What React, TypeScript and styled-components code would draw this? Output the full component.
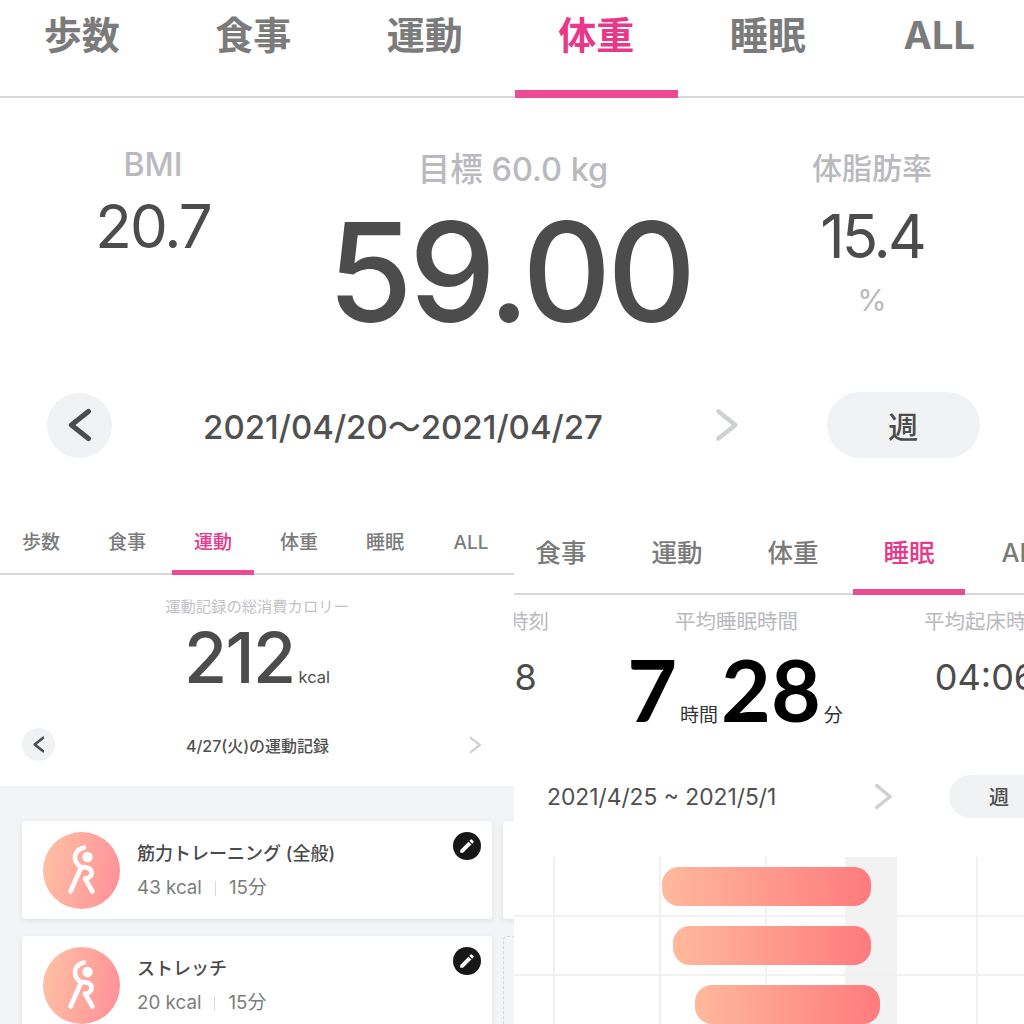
import React from "react"
import styled, { createGlobalStyle } from "styled-components"
import { MdEdit } from "react-icons/md"

const JP = `"Inter", "Noto Sans CJK JP", sans-serif`

const GlobalStyle = createGlobalStyle`
  html, body {
    margin: 0;
    background: #fff;
    overflow: hidden;
  }
  #root {
    width: 1024px;
    height: 1024px;
    overflow: hidden;
    font-family: ${JP};
  }
`

const ChevronSvg = styled.svg`
  flex: none;
`

const Chevron = ({ dir, size, color, width }: { dir: "left" | "right"; size: number; color: string; width: number }) => (
  <ChevronSvg width={size * 0.7} height={size} viewBox="0 0 14 20" fill="none" stroke={color} strokeWidth={width} strokeLinecap="round" strokeLinejoin="round">
    <polyline points={dir === "left" ? "12,2 2,10 12,18" : "2,2 12,10 2,18"} />
  </ChevronSvg>
)

const StretchIcon = () => (
  <svg width="77" height="77" viewBox="0 0 77 77" fill="none" stroke="#fff" strokeWidth="4.6" strokeLinecap="round" strokeLinejoin="round">
    <circle cx="44.5" cy="25" r="5.2" fill="#fff" stroke="none" />
    <path d="M41 15.5C34 17 30 23 33 30C34 32 36 34 38 35" />
    <path d="M38 35.5L27.5 59.5" />
    <path d="M38 35.5C45 34 49.5 38 48.5 42C48 45 45 46.5 42 46.5L49.5 59.5" />
  </svg>
)

const TABS = ["歩数", "食事", "運動", "体重", "睡眠", "ALL"]

const TabBar = styled.div`
  flex: none;
  box-shadow: inset 0 -2px 0 #d8d8da;
  overflow: hidden;
`

const TabTrack = styled.div<{ $offset: number }>`
  display: flex;
  margin-left: ${p => p.$offset}px;
`

const Tab = styled.div<{ $width: number; $height: number; $size: number; $inset: number; $bar: number; $pad: number; $active?: boolean }>`
  flex: none;
  box-sizing: border-box;
  width: ${p => p.$width - p.$inset * 2}px;
  height: ${p => p.$height}px;
  margin: 0 ${p => p.$inset}px;
  display: flex;
  justify-content: center;
  white-space: nowrap;
  padding-top: ${p => p.$pad}px;
  font-size: ${p => p.$size}px;
  line-height: 1.2;
  font-weight: ${p => (p.$size > 30 ? 700 : 500)};
  color: ${p => (p.$active ? "#e8388a" : "#7b7b7b")};
  border-bottom: ${p => p.$bar}px solid ${p => (p.$active ? "#ee4a94" : "transparent")};
`

const Page = styled.main`
  width: 1024px;
  height: 1024px;
  display: flex;
  flex-direction: column;
  background: #fff;
`

const TopPanel = styled.section`
  height: 495px;
  flex: none;
`

const TopStats = styled.div`
  display: grid;
  grid-template-columns: 306px 414px 304px;
  height: 294px;
`

const StatColumn = styled.div<{ $top: number }>`
  padding-top: ${p => p.$top}px;
  display: flex;
  flex-direction: column;
  align-items: center;
  color: #4c4c4c;
`

const StatLabel = styled.div<{ $size: number }>`
  font-size: ${p => p.$size}px;
  line-height: 1.2;
  font-weight: 500;
  color: #b9b9be;
  white-space: nowrap;
`

const StatValue = styled.div<{ $size: number; $top: number; $spacing: number }>`
  font-size: ${p => p.$size}px;
  letter-spacing: ${p => p.$spacing}px;
  line-height: 1;
  margin-top: ${p => p.$top}px;
  white-space: nowrap;
`

const MainValue = styled.div`
  font-size: 138px;
  font-weight: 500;
  letter-spacing: -4px;
  line-height: 1;
  margin: 14px 6px 0 0;
  white-space: nowrap;
`

const StatUnit = styled.div`
  margin-top: 16px;
  font-size: 30px;
  line-height: 1.2;
  color: #b9b9be;
`

const DateRow = styled.div`
  display: flex;
  align-items: center;
  height: 66px;
  padding-left: 47px;
`

const RoundButton = styled.div<{ $size: number }>`
  flex: none;
  width: ${p => p.$size}px;
  height: ${p => p.$size}px;
  border-radius: 50%;
  background: #f1f2f4;
  display: flex;
  align-items: center;
  justify-content: center;
`

const DateText = styled.div<{ $width: number; $size: number; $weight: number; $after?: number }>`
  width: ${p => p.$width}px;
  margin-right: ${p => p.$after ?? 0}px;
  flex: none;
  text-align: center;
  font-size: ${p => p.$size}px;
  font-weight: ${p => p.$weight};
  color: #505050;
  white-space: nowrap;
`

const Pill = styled.div<{ $width: number; $height: number; $size: number; $left: number }>`
  flex: none;
  width: ${p => p.$width}px;
  height: ${p => p.$height}px;
  margin-left: ${p => p.$left}px;
  border-radius: ${p => p.$height / 2}px;
  background: #f1f2f4;
  display: flex;
  align-items: center;
  justify-content: center;
  font-size: ${p => p.$size}px;
  font-weight: 500;
  color: #4c4c4c;
`

const Bottom = styled.div`
  display: flex;
  flex: 1;
  min-height: 0;
`

const LeftPanel = styled.section`
  width: 514px;
  flex: none;
  overflow: hidden;
  display: flex;
  flex-direction: column;
`

const RightPanel = styled.section`
  width: 510px;
  flex: none;
  overflow: hidden;
`

const Total = styled.div`
  display: flex;
  flex-direction: column;
  align-items: center;
  height: 153px;
  padding-top: 23px;
  box-sizing: border-box;
`

const TotalLabel = styled.div`
  font-size: 15.3px;
  line-height: 18px;
  color: #c2c2c6;
`

const TotalValue = styled.div`
  display: flex;
  align-items: baseline;
  gap: 4px;
  margin-top: 6px;
  font-size: 70px;
  font-weight: 500;
  letter-spacing: -1.6px;
  line-height: 72px;
  color: #4c4c4c;
`

const TotalUnit = styled.span`
  font-size: 16.5px;
  font-weight: 400;
  letter-spacing: 0;
`

const RecordNav = styled.div`
  display: flex;
  align-items: center;
  height: 33px;
  padding-left: 22px;
`

const ListArea = styled.div`
  flex: 1;
  margin-top: 25px;
  background: #f3f4f6;
  padding: 35px 0 0 22px;
  display: grid;
  grid-template-columns: 470px 470px;
  grid-auto-rows: 98px;
  column-gap: 11px;
  row-gap: 17px;
  overflow: hidden;
`

const Card = styled.article`
  position: relative;
  display: flex;
  align-items: center;
  gap: 17px;
  padding-left: 21px;
  background: #fff;
  border-radius: 4px;
  box-shadow: 0 2px 6px rgba(0, 0, 0, 0.08);
`

const EmptyCard = styled.div`
  border: 1px dashed #d8d9dc;
  border-radius: 4px;
`

const Avatar = styled.div`
  width: 77px;
  height: 77px;
  flex: none;
  border-radius: 50%;
  background: linear-gradient(100deg, #ffc2a4, #ff8f98);
`

const CardCopy = styled.div`
  padding-top: 2px;
`

const CardTitle = styled.div`
  font-size: 18px;
  font-weight: 500;
  line-height: 24px;
  color: #4a4a4a;
`

const CardMeta = styled.div`
  display: flex;
  align-items: center;
  margin-top: 10px;
  font-size: 18.8px;
  line-height: 24px;
  color: #7d7d7d;
`

const MetaDivider = styled.span`
  width: 1px;
  height: 15px;
  margin: 0 13px;
  background: #d9d9d9;
`

const EditButton = styled.button`
  position: absolute;
  top: 11px;
  right: 11px;
  width: 28px;
  height: 28px;
  padding: 0;
  border: 0;
  border-radius: 50%;
  background: #171717;
  color: #fff;
  display: flex;
  align-items: center;
  justify-content: center;
`

const SleepStats = styled.div`
  display: grid;
  grid-template-columns: repeat(3, 249px);
  margin-left: -151px;
  height: 180px;
  padding-top: 13px;
  box-sizing: border-box;
`

const SleepLabel = styled.div`
  font-size: 20.5px;
  line-height: 28px;
  text-align: center;
  color: #b9b9be;
  white-space: nowrap;
`

const SleepSide = styled.div`
  margin-top: 19px;
  text-align: center;
  font-size: 36px;
  line-height: 44px;
  color: #4c4c4c;
  white-space: nowrap;
`

const SleepMain = styled.div`
  display: flex;
  align-items: baseline;
  justify-content: center;
  margin-top: 10px;
  font-family: "Lato", sans-serif;
  font-size: 86px;
  line-height: 86px;
  font-weight: 700;
  color: #000;
`

const SleepUnit = styled.span`
  font-family: ${JP};
  font-size: 19px;
  font-weight: 400;
  color: #333;
  margin: 0 3px;
`

const SleepNav = styled.div`
  display: flex;
  align-items: center;
  height: 43px;
  padding-left: 33px;
`

const Chart = styled.svg`
  display: block;
  margin-top: 39px;
`

const ChartBars = [
  { x: 148, y: 10, w: 209 },
  { x: 159, y: 69, w: 198 },
  { x: 181, y: 128, w: 185 },
]

const Records = [
  { title: "筋力トレーニング (全般)", kcal: "43 kcal" },
  { title: "ストレッチ", kcal: "20 kcal" },
]

export default function App() {
  return (
    <Page>
      <GlobalStyle />
      <TopPanel>
        <TabBar>
          <TabTrack $offset={-4}>
            {TABS.map(t => (
              <Tab key={t} $width={171.5} $height={98} $size={38} $pad={13} $inset={4} $bar={8} $active={t === "体重"}>{t}</Tab>
            ))}
          </TabTrack>
        </TabBar>
        <TopStats>
          <StatColumn $top={48}>
            <StatLabel $size={32}>BMI</StatLabel>
            <StatValue $size={60} $top={12} $spacing={-2}>20.7</StatValue>
          </StatColumn>
          <StatColumn $top={52}>
            <StatLabel $size={32.5}>目標 60.0 kg</StatLabel>
            <MainValue>59.00</MainValue>
          </StatColumn>
          <StatColumn $top={52}>
            <StatLabel $size={30}>体脂肪率</StatLabel>
            <StatValue $size={60} $top={20} $spacing={-3}>15.4</StatValue>
            <StatUnit>%</StatUnit>
          </StatColumn>
        </TopStats>
        <DateRow>
          <RoundButton $size={65}><Chevron dir="left" size={34} color="#4c4c4c" width={3} /></RoundButton>
          <DateText $width={582} $size={33} $weight={500} $after={21}>2021/04/20〜2021/04/27</DateText>
          <Chevron dir="right" size={34} color="#cfd0d4" width={2.6} />
          <Pill $width={153} $height={66} $size={30} $left={88}>週</Pill>
        </DateRow>
      </TopPanel>
      <Bottom>
        <LeftPanel>
          <TabBar>
            <TabTrack $offset={-2}>
              {TABS.map(t => (
                <Tab key={t} $width={86} $height={80} $size={19} $pad={37} $inset={2} $bar={5} $active={t === "運動"}>{t}</Tab>
              ))}
            </TabTrack>
          </TabBar>
          <Total>
            <TotalLabel>運動記録の総消費カロリー</TotalLabel>
            <TotalValue>212<TotalUnit>kcal</TotalUnit></TotalValue>
          </Total>
          <RecordNav>
            <RoundButton $size={33}><Chevron dir="left" size={17} color="#4c4c4c" width={3} /></RoundButton>
            <DateText $width={405} $size={16} $weight={500} $after={9}>4/27(火)の運動記録</DateText>
            <Chevron dir="right" size={18} color="#cfd0d4" width={2.6} />
          </RecordNav>
          <ListArea>
            {Records.map((r, i) => (
              <React.Fragment key={r.title}>
                <Card>
                  <Avatar><StretchIcon /></Avatar>
                  <CardCopy>
                    <CardTitle>{r.title}</CardTitle>
                    <CardMeta>{r.kcal}<MetaDivider />15分</CardMeta>
                  </CardCopy>
                  <EditButton aria-label="edit"><MdEdit size={18} /></EditButton>
                </Card>
                {i === 0 ? <Card /> : <EmptyCard />}
              </React.Fragment>
            ))}
          </ListArea>
        </LeftPanel>
        <RightPanel>
          <TabBar>
            <TabTrack $offset={-11}>
              {TABS.slice(1).map(t => (
                <Tab key={t} $width={116} $height={100} $size={25.5} $pad={43} $inset={2} $bar={6} $active={t === "睡眠"}>{t}</Tab>
              ))}
            </TabTrack>
          </TabBar>
          <SleepStats>
            <div>
              <SleepLabel>平均就寝時刻</SleepLabel>
              <SleepSide>22:58</SleepSide>
            </div>
            <div>
              <SleepLabel>平均睡眠時間</SleepLabel>
              <SleepMain>7<SleepUnit>時間</SleepUnit>28<SleepUnit>分</SleepUnit></SleepMain>
            </div>
            <div>
              <SleepLabel>平均起床時刻</SleepLabel>
              <SleepSide>04:06</SleepSide>
            </div>
          </SleepStats>
          <SleepNav>
            <DateText $width={229} $size={22.8} $weight={400} $after={98}>2021/4/25 ~ 2021/5/1</DateText>
            <Chevron dir="right" size={27} color="#cfd0d4" width={2.6} />
            <Pill $width={100} $height={43} $size={20} $left={56}>週</Pill>
          </SleepNav>
          <Chart width="510" height="170" viewBox="0 0 510 170">
            <defs>
              <linearGradient id="bar">
                <stop offset="0" stopColor="#ffb99c" />
                <stop offset="1" stopColor="#ff7a7e" />
              </linearGradient>
            </defs>
            <rect x="331" y="0" width="52" height="170" fill="#f2f2f3" />
            {[40, 146, 252, 463].map(x => (
              <line key={x} x1={x} x2={x} y1="0" y2="170" stroke="#f1f1f2" strokeWidth="2" />
            ))}
            {[59, 118].map(y => (
              <line key={y} x1="0" x2="510" y1={y} y2={y} stroke="#f1f1f2" strokeWidth="2" />
            ))}
            {ChartBars.map(b => (
              <rect key={b.y} x={b.x} y={b.y} width={b.w} height="39" rx="17" fill="url(#bar)" />
            ))}
          </Chart>
        </RightPanel>
      </Bottom>
    </Page>
  )
}
